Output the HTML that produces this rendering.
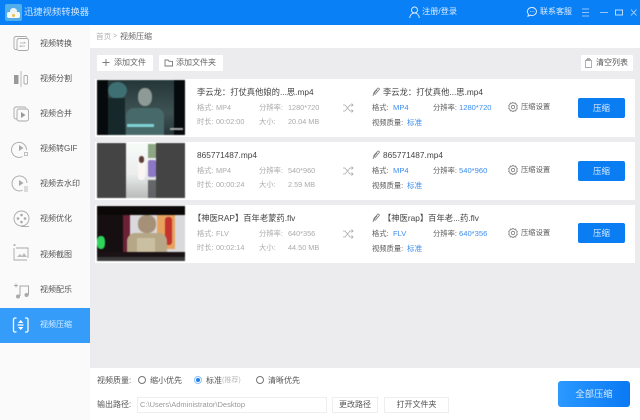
<!DOCTYPE html>
<html><head><meta charset="utf-8"><style>
*{margin:0;padding:0;box-sizing:border-box}
html,body{width:640px;height:420px;overflow:hidden;background:#fff}
body{position:relative;font-family:"Liberation Sans","Noto Sans CJK SC",sans-serif;font-size:8px;color:#555;filter:blur(.3px)}
.a,.t{position:absolute;white-space:nowrap}
.t{line-height:12px;height:12px}
svg{position:absolute;overflow:visible;fill:none}
.g{color:#aaa;font-size:7.3px}
.d{color:#5c5c5c;font-size:7.3px}
.b{color:#3b8df0;font-size:7.6px}
.nav{left:40px;color:#555;font-size:8px}
.ti{font-size:8.3px;color:#444}
.row{position:absolute;left:95px;width:540px;height:58.5px;background:#fff}
.th{position:absolute;left:97px;width:88px;height:55px;overflow:hidden;filter:blur(.6px)}
.th div{position:absolute}
.btn{position:absolute;left:578px;width:47px;height:20px;background:#0b7df2;border-radius:2px;color:#dcecff;font-size:8.5px;line-height:20px;text-align:center}
.wb{position:absolute;background:#fff;border-radius:1px}
.ob{position:absolute;background:#fff;border:1px solid #eee;color:#555;font-size:8px;text-align:center;line-height:14px}
.r{position:absolute;width:8px;height:8px;border:1px solid #777;border-radius:50%;background:#fff}
</style></head><body>
<div class="a" style="left:0;top:0;width:640px;height:25px;background:#0a80f6"></div>
<div class="a" style="left:0;top:25px;width:90px;height:395px;background:#fafafa"></div>
<div class="a" style="left:90px;top:48px;width:550px;height:320px;background:#ecebee"></div>

<!-- title bar -->
<div class="a" style="left:5px;top:4px;width:17px;height:17px;background:#52aeea;border-radius:2px"></div>
<div class="a" style="left:7px;top:12px;width:13px;height:6px;background:#f5f8f0;border-radius:2px"></div>
<div class="a" style="left:10px;top:8px;width:7px;height:6px;background:#eef2f2;border-radius:50%"></div>
<div class="a" style="left:12px;top:14px;width:3px;height:3px;background:#e6c24a;border-radius:50%"></div>
<div class="t" style="left:24px;top:6px;font-size:9.3px;color:#cfe5fd">迅捷视频转换器</div>
<svg style="left:409px;top:6px" width="11" height="13" viewBox="0 0 11 13" stroke="#e3f0ff" stroke-width=".9"><circle cx="5.5" cy="4" r="3"/><path d="M.7 12c.3-3 2.2-5 4.8-5s4.5 2 4.8 5"/></svg>
<div class="t" style="left:422px;top:6px;font-size:8.2px;color:#dcecff">注册/登录</div>
<svg style="left:527px;top:7px" width="10" height="10" viewBox="0 0 10 10" stroke="#e3f0ff" stroke-width=".9"><path d="M5 .5a4.5 4 0 1 1-2 7.6L1 9.3l.4-2.3A4.5 4 0 0 1 5 .5z"/><path d="M3 4.6h.6M4.800 4.600h.6M6.600 4.600h.6"/></svg>
<div class="t" style="left:540px;top:6px;font-size:8px;color:#dcecff">联系客服</div>
<svg style="left:582px;top:8px" width="50" height="9" viewBox="0 0 50 9" stroke="#bcdcfc" stroke-width=".8"><path d="M0 1h7M0 4.500h7M0 8h7M18 4.500h8"/><rect x="33.500" y="2" width="7" height="5" stroke-width="1"/><path d="M49 1.500l5.500 6M54.500 1.500l-5.500 6"/></svg>

<!-- sidebar -->
<div class="a" style="left:0;top:308px;width:90px;height:35px;background:#359df9"></div>
<div class="t nav" style="top:38px">视频转换</div>
<div class="t nav" style="top:73px">视频分割</div>
<div class="t nav" style="top:108px">视频合并</div>
<div class="t nav" style="top:143px">视频转GIF</div>
<div class="t nav" style="top:178px">视频去水印</div>
<div class="t nav" style="top:213px">视频优化</div>
<div class="t nav" style="top:249px">视频截图</div>
<div class="t nav" style="top:284px">视频配乐</div>
<div class="t nav" style="top:319px;color:#d8ecff">视频压缩</div>

<svg style="left:0;top:0" width="90" height="345" viewBox="0 0 90 345" stroke="#a8a8a8" stroke-width=".9">
<path d="M17 49.500h-1a2 2 0 0 1-2-2v-9a2 2 0 0 1 2-2h9a2 2 0 0 1 2 1"/><rect x="17" y="38.500" width="11.500" height="12" rx="2"/><path d="M20 43h5l-1-1M25 46h-5l1 1" stroke-width=".8"/>
<rect x="14" y="75" width="4.500" height="9" fill="#999" stroke="none"/><path d="M21 71v16" stroke="#c4c4c4" stroke-width="1.200"/><rect x="24" y="75.500" width="3.500" height="8.500" rx="1"/>
<path d="M17 119h-1a2 2 0 0 1-2-2v-8a2 2 0 0 1 2-2h8a2 2 0 0 1 2 1"/><rect x="17" y="109" width="11.500" height="12" rx="2"/><path d="M21 112l4.500 3-4.500 3z" fill="#999" stroke="none"/>
<path d="M26.500 150a7.500 7.500 0 1 0-4 6.500"/><path d="M19 145l4.500 3-4.500 3z" fill="#aaa" stroke="none"/><path d="M24.500 152.500h3v3h-3z" stroke-width=".7"/>
<path d="M27 183a7.500 7.500 0 1 0-4.500 7.300"/><path d="M19 180l4.500 3-4.500 3z" fill="#aaa" stroke="none"/><path d="M24 187h4M24 189h4M24 191h4" stroke-width=".7"/>
<circle cx="21.500" cy="218.500" r="7.500"/><path d="M21 226.500h8"/><circle cx="21.500" cy="215" r="1.300" fill="#aaa" stroke="none"/><circle cx="21.500" cy="222" r="1.300" fill="#aaa" stroke="none"/><circle cx="18" cy="218.500" r="1.300" fill="#aaa" stroke="none"/><circle cx="25" cy="218.500" r="1.300" fill="#aaa" stroke="none"/>
<path d="M14 248v12h13M16 248h12v10"/><path d="M17 257l3-3 2 2 2-3 3 4z" fill="#bbb" stroke="none"/><circle cx="14.500" cy="245" r=".6"/>
<path d="M20 296v-10h8.500v9" stroke-width="1"/><circle cx="18" cy="296.500" r="2" fill="#aaa" stroke="none"/><circle cx="26.500" cy="295" r="2" fill="#aaa" stroke="none"/><path d="M14 285.500h4M16 283.500v4"/>
<g stroke="#fff" stroke-width="1.300"><path d="M16.500 318h-1.500a1.500 1.500 0 0 0-1.500 1.500v11a1.500 1.500 0 0 0 1.500 1.500h1.500M25 318h1.500a1.500 1.500 0 0 1 1.500 1.500v11a1.500 1.500 0 0 1-1.500 1.500h-1.500"/><path d="M17.500 325h6"/></g>
<path d="M18 323l2.700-3 2.700 3zM18 327l2.700 3 2.700-3z" fill="#fff" stroke="none"/>
</svg>

<!-- breadcrumb -->
<div class="t" style="left:96px;top:31px;font-size:7.6px;color:#b0b0b0">首页</div>
<div class="t" style="left:113px;top:31px;font-size:7px;color:#b0b0b0">&gt;</div>
<div class="t" style="left:120px;top:31px;font-size:8px;color:#666">视频压缩</div>

<!-- toolbar -->
<div class="wb" style="left:97px;top:55px;width:56px;height:16px"></div>
<div class="wb" style="left:159px;top:55px;width:64px;height:16px"></div>
<div class="wb" style="left:581px;top:55px;width:52px;height:16px"></div>
<div class="t" style="left:114px;top:57px;color:#666">添加文件</div>
<div class="t" style="left:176px;top:57px;color:#666">添加文件夹</div>
<div class="t" style="left:596px;top:57px;color:#555">清空列表</div>
<svg style="left:0;top:0" width="640" height="80" viewBox="0 0 640 80" stroke="#777" stroke-width=".9"><path d="M106 59v7M102.500 62.500h7M165 60h3l1 1.300h3.500v4.700H165z"/><path d="M586 59.500h5M585.500 60.500h6v7h-6zM587 58.500h3" stroke="#aaa"/></svg>

<!-- rows -->
<div class="row" style="top:78.500px"></div>
<div class="row" style="top:141.500px"></div>
<div class="row" style="top:204.500px"></div>

<!-- thumb 1 -->
<div class="th" style="top:80px;background:#070a0c">
<div style="left:11px;top:0;width:66px;height:55px;background:linear-gradient(#253638,#3f5354 60%,#263638)"></div>
<div style="left:11px;top:2px;width:19px;height:17px;background:#3d6f73;border-radius:50%"></div>
<div style="left:11px;top:18px;width:17px;height:37px;background:#16282a"></div>
<div style="left:41px;top:8px;width:14px;height:18px;background:#8e9a95;border-radius:45%"></div>
<div style="left:29px;top:28px;width:38px;height:27px;background:#47696a;border-radius:8px 8px 0 0"></div>
<div style="left:30px;top:44px;width:27px;height:3px;background:#7fd2d6"></div>
<div style="left:73px;top:48px;width:13px;height:2px;background:#aaa"></div>
</div>
<!-- thumb 2 -->
<div class="th" style="top:143px;background:#444">
<div style="left:29px;top:0;width:30px;height:55px;background:linear-gradient(#f6fbf8,#eceeee 55%,#b8bcba)"></div>
<div style="left:51px;top:1px;width:8px;height:14px;background:#8ea684"></div>
<div style="left:41px;top:13px;width:7px;height:24px;background:#fbf6f4;border-radius:3px"></div>
<div style="left:42px;top:13px;width:5px;height:7px;background:#5d3d38;border-radius:3px"></div>
<div style="left:51px;top:17px;width:8px;height:17px;background:#8c78c4;border-radius:2px"></div>
<div style="left:51px;top:37px;width:8px;height:18px;background:#4a4a50;opacity:.8"></div>
</div>
<!-- thumb 3 -->
<div class="th" style="top:206px;background:#0c0808">
<div style="left:0;top:9px;width:88px;height:42px;background:#d9d9dc"></div>
<div style="left:0;top:9px;width:26px;height:42px;background:#150f12"></div>
<div style="left:26px;top:9px;width:7px;height:42px;background:#6b2136"></div>
<div style="left:0;top:30px;width:8px;height:13px;background:#2fd45c;border-radius:40%"></div>
<div style="left:60px;top:9px;width:18px;height:34px;background:#e6a25e"></div>
<div style="left:68px;top:11px;width:7px;height:28px;background:#c6322c;border-radius:3px"></div>
<div style="left:41px;top:9px;width:18px;height:18px;background:#a69078;border-radius:45%"></div>
<div style="left:30px;top:27px;width:40px;height:24px;background:#b6a787;border-radius:8px 8px 0 0"></div>
<div style="left:40px;top:32px;width:18px;height:19px;background:#cbbfa2"></div>
<div style="left:0;top:46px;width:88px;height:5px;background:#1a1214"></div>
<div style="left:0;top:51px;width:88px;height:4px;background:#3a3a3a"></div>
</div>

<!-- left col -->
<div class="t ti" style="left:197px;top:86px">李云龙：打仗真他娘的...思.mp4</div>
<div class="t g" style="left:197px;top:102px">格式:</div><div class="t g" style="left:216px;top:102px">MP4</div>
<div class="t g" style="left:259px;top:102px">分辨率:</div><div class="t g" style="left:288px;top:102px">1280*720</div>
<div class="t g" style="left:197px;top:116px">时长:</div><div class="t g" style="left:216px;top:116px">00:02:00</div>
<div class="t g" style="left:259px;top:116px">大小:</div><div class="t g" style="left:288px;top:116px">20.04 MB</div>

<div class="t ti" style="left:197px;top:149px">865771487.mp4</div>
<div class="t g" style="left:197px;top:165px">格式:</div><div class="t g" style="left:216px;top:165px">MP4</div>
<div class="t g" style="left:259px;top:165px">分辨率:</div><div class="t g" style="left:288px;top:165px">540*960</div>
<div class="t g" style="left:197px;top:179px">时长:</div><div class="t g" style="left:216px;top:179px">00:00:24</div>
<div class="t g" style="left:259px;top:179px">大小:</div><div class="t g" style="left:288px;top:179px">2.59 MB</div>

<div class="t ti" style="left:193px;top:212px">【神医RAP】百年老蒙药.flv</div>
<div class="t g" style="left:197px;top:228px">格式:</div><div class="t g" style="left:216px;top:228px">FLV</div>
<div class="t g" style="left:259px;top:228px">分辨率:</div><div class="t g" style="left:288px;top:228px">640*356</div>
<div class="t g" style="left:197px;top:242px">时长:</div><div class="t g" style="left:216px;top:242px">00:02:14</div>
<div class="t g" style="left:259px;top:242px">大小:</div><div class="t g" style="left:288px;top:242px">44.50 MB</div>

<!-- right col -->
<div class="t ti" style="left:383px;top:86px">李云龙：打仗真他...思.mp4</div>
<div class="t d" style="left:372px;top:102px">格式:</div><div class="t b" style="left:393px;top:102px">MP4</div>
<div class="t d" style="left:433px;top:102px">分辨率:</div><div class="t b" style="left:459px;top:102px">1280*720</div>
<div class="t d" style="left:372px;top:117px">视频质量:</div><div class="t b" style="left:407px;top:117px">标准</div>
<div class="t d" style="left:521px;top:101px">压缩设置</div>

<div class="t ti" style="left:383px;top:149px">865771487.mp4</div>
<div class="t d" style="left:372px;top:165px">格式:</div><div class="t b" style="left:393px;top:165px">MP4</div>
<div class="t d" style="left:433px;top:165px">分辨率:</div><div class="t b" style="left:459px;top:165px">540*960</div>
<div class="t d" style="left:372px;top:180px">视频质量:</div><div class="t b" style="left:407px;top:180px">标准</div>
<div class="t d" style="left:521px;top:164px">压缩设置</div>

<div class="t ti" style="left:383px;top:212px">【神医rap】百年老...药.flv</div>
<div class="t d" style="left:372px;top:228px">格式:</div><div class="t b" style="left:393px;top:228px">FLV</div>
<div class="t d" style="left:433px;top:228px">分辨率:</div><div class="t b" style="left:459px;top:228px">640*356</div>
<div class="t d" style="left:372px;top:243px">视频质量:</div><div class="t b" style="left:407px;top:243px">标准</div>
<div class="t d" style="left:521px;top:227px">压缩设置</div>

<div class="btn" style="top:98px">压缩</div>
<div class="btn" style="top:161px">压缩</div>
<div class="btn" style="top:223px">压缩</div>

<svg style="left:0;top:0" width="640" height="270" viewBox="0 0 640 270" stroke="#888" stroke-width=".8">
<defs><g id="sh"><path d="M0 -3h2l5 6h2.500M0 3h2l5-6h2.500M8.500-4.500l1.500 1.500-1.500 1.500M8.500 1.500l1.500 1.500-1.500 1.500" stroke="#aaa"/></g>
<g id="pe"><path d="M0 6l1-3.500 3.500-4a1 1 0 0 1 1.600 1.300l-3.600 4.200a.8.8 0 0 1-1.200-1l2.800-3.200" stroke="#777"/></g>
<g id="ge"><circle r="1.700" stroke="#777"/><path d="M0-4.600L1.200-3.700 2.700-3.900 3.100-2.400 4.300-1.500 3.800 0 4.300 1.500 3.100 2.400 2.700 3.900 1.200 3.700 0 4.600-1.200 3.700-2.700 3.900-3.100 2.400-4.300 1.500-3.800 0-4.300-1.500-3.100-2.400-2.700-3.900-1.200-3.700Z" stroke="#777"/></g></defs>
<use href="#sh" x="343" y="108"/><use href="#sh" x="343" y="171"/><use href="#sh" x="343" y="234"/>
<use href="#pe" x="373" y="90"/><use href="#pe" x="373" y="153"/><use href="#pe" x="373" y="216"/>
<use href="#ge" x="513" y="107"/><use href="#ge" x="513" y="170"/><use href="#ge" x="513" y="233"/>
</svg>

<!-- bottom -->
<div class="t" style="left:97px;top:375px;color:#555;font-size:8px">视频质量:</div>
<div class="r" style="left:138px;top:376px"></div>
<div class="t" style="left:150px;top:375px;color:#555">缩小优先</div>
<div class="r" style="left:194px;top:376px;border-color:#8fc0f8"></div>
<div class="a" style="left:196px;top:378px;width:4px;height:4px;border-radius:50%;background:#1f7fe8"></div>
<div class="t" style="left:206px;top:375px;color:#555">标准</div>
<div class="t" style="left:222px;top:375px;color:#bbb;font-size:7px">(推荐)</div>
<div class="r" style="left:256px;top:376px"></div>
<div class="t" style="left:268px;top:375px;color:#555">清晰优先</div>

<div class="t" style="left:97px;top:399px;color:#555">输出路径:</div>
<div class="a" style="left:137px;top:397px;width:190px;height:16px;border:1px solid #eee;background:#fff"></div>
<div class="t" style="left:140px;top:399px;color:#999;font-size:7.5px">C:\Users\Administrator\Desktop</div>
<div class="ob" style="left:332px;top:397px;width:46px;height:16px">更改路径</div>
<div class="ob" style="left:384px;top:397px;width:65px;height:16px">打开文件夹</div>
<div class="a" style="left:558px;top:381px;width:72px;height:26px;border-radius:3px;background:linear-gradient(90deg,#2b99ff,#0a79f3);color:#d9ecff;font-size:9.3px;line-height:26px;text-align:center">全部压缩</div>
</body></html>
